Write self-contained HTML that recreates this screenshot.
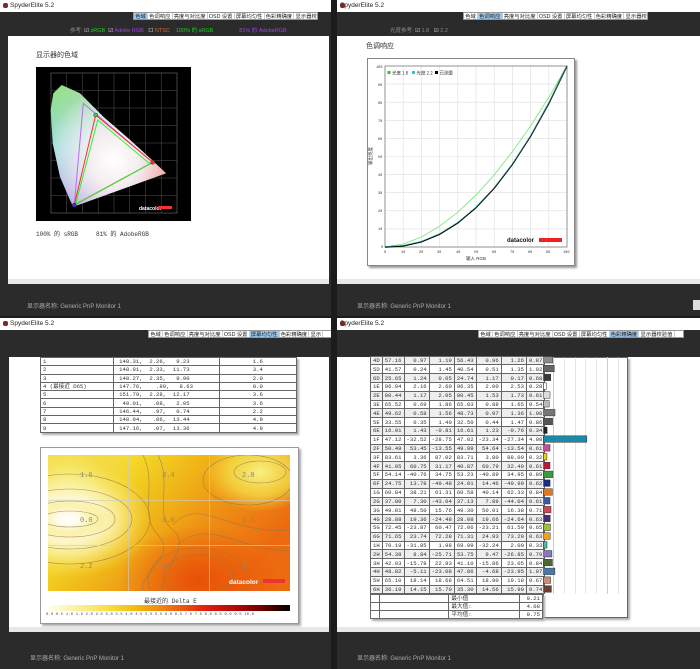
<!DOCTYPE html>
<html><head><meta charset="utf-8"><style>
*{margin:0;padding:0;box-sizing:border-box}
body{width:700px;height:669px;background:#1c1c1c;position:relative;overflow:hidden;font-family:"Liberation Sans","Noto Sans CJK SC",sans-serif}
.a{position:absolute}
.title{background:#fff;height:12px;font-size:6.5px;line-height:12px;color:#222;padding-left:10px}
.title:before{content:"";position:absolute;left:3px;top:3px;width:5px;height:5px;background:#7a2a2a;border-radius:2px}
.dark{background:#2b2b2b}
.tabs{display:flex;background:#fff;height:8px;font-size:5.3px;line-height:8px;color:#222;border:1px solid #999;overflow:hidden}
.tabs span{padding:0 1.2px;border-right:1px solid #ccc;white-space:nowrap}
.tabs .on{background:#9cc8f0}
.foot{font-size:6px;color:#aaa}
.sb{background:#e8e8e8;height:5px}
table{border-collapse:collapse;font-family:"Liberation Mono","Noto Sans CJK SC",monospace;font-size:5.6px;color:#333}
td{border:1px solid #666;padding:0 2px;white-space:nowrap;overflow:hidden}
.rt td{height:8.82px;line-height:7px}
.rt tr:nth-child(odd) td{background:#eee}
.rt td.n{text-align:right;padding-right:2px}
.lt td{height:8.3px;line-height:7px}
</style></head><body>

<!-- TOP LEFT -->
<div class="a title" style="left:0;top:0;width:331px">SpyderElite 5.2</div>
<div class="a dark" style="left:0;top:12px;width:331px;height:304px"></div>
<div class="a tabs" style="left:133px;top:12px;width:185px"><span class="on">色域</span><span>色调响应</span><span>亮度与对比度</span><span>OSD 设置</span><span>屏幕均匀性</span><span>色彩精确度</span><span>显示器校验值</span></div>
<div class="a" style="left:70px;top:26px;font-size:5.5px;color:#888;white-space:nowrap">参考: <span style="color:#ddd">☑</span> <span style="color:#2c2">sRGB</span> &nbsp;<span style="color:#ddd">☑</span> <span style="color:#94d">Adobe RGB</span> &nbsp;&nbsp;<span style="color:#fff">☐</span> <span style="color:#d63">NTSC</span> &nbsp;&nbsp;&nbsp;<span style="color:#2c2">100% 的 sRGB</span><span style="display:inline-block;width:26px"></span><span style="color:#94d">81% 的 AdobeRGB</span></div>
<div class="a" style="left:8px;top:36px;width:321px;height:243px;background:#fff"></div>
<div class="a sb" style="left:8px;top:279px;width:321px"></div>
<div class="a" style="left:36px;top:50px;font-size:7px;color:#333">显示器的色域</div>
<svg class="a" style="left:36px;top:67px" width="155" height="154" viewBox="36 67 155 154">
<defs>
<radialGradient id="g1" cx="0.55" cy="0.62" r="0.6"><stop offset="0" stop-color="#fff"/><stop offset="0.35" stop-color="#f4eef0"/><stop offset="1" stop-color="#fff" stop-opacity="0"/></radialGradient>
<linearGradient id="g2" x1="0" y1="0" x2="0.3" y2="1"><stop offset="0" stop-color="#8fe07a"/><stop offset="0.5" stop-color="#8fd8d8"/><stop offset="1" stop-color="#8a7ae0"/></linearGradient>
<linearGradient id="g3" x1="0" y1="0" x2="1" y2="0.3"><stop offset="0" stop-color="#fff" stop-opacity="0"/><stop offset="0.7" stop-color="#f0a0c0" stop-opacity=".5"/><stop offset="1" stop-color="#e88080"/></linearGradient>
</defs>
<rect x="36" y="67" width="155" height="154" fill="#000"/>
<g stroke="#555" stroke-width="0.5" fill="none">
<rect x="51" y="73" width="126" height="140" stroke="#888"/>
<path d="M66.7 73V213M82.5 73V213M98.2 73V213M114 73V213M129.7 73V213M145.5 73V213M161.2 73V213M51 90.5H177M51 108H177M51 125.5H177M51 143H177M51 160.5H177M51 178H177M51 195.5H177"/>
</g>
<path d="M61.7 85L53.3 93.3L50.7 110L52.7 143.3L60 176.7L70 200L73.3 206.7L166 173.3L150 158.3L130 140L103.3 116.7L80 93.3Z" fill="url(#g2)"/>
<path d="M61.7 85L53.3 93.3L50.7 110L52.7 143.3L60 176.7L70 200L73.3 206.7L166 173.3L150 158.3L130 140L103.3 116.7L80 93.3Z" fill="url(#g3)"/>
<path d="M61.7 85L53.3 93.3L50.7 110L52.7 143.3L60 176.7L70 200L73.3 206.7L166 173.3L150 158.3L130 140L103.3 116.7L80 93.3Z" fill="url(#g1)"/>
<path d="M83.3 103.3L152.7 162.3L74.3 205Z" fill="none" stroke="#b070f0" stroke-width="1"/>
<path d="M95.7 115L152.7 162.3L74.3 205Z" fill="none" stroke="#f03030" stroke-width="1"/>
<path d="M97.7 120L150 164L75.7 204Z" fill="none" stroke="#30f030" stroke-width="1"/>
<circle cx="95.7" cy="115" r="2" fill="#4c4" stroke="#333" stroke-width=".5"/>
<circle cx="152.7" cy="162.3" r="2" fill="#e33" stroke="#333" stroke-width=".5"/>
<circle cx="74.3" cy="205" r="2" fill="#33e" stroke="#333" stroke-width=".5"/>
<text x="139" y="210" font-size="5" fill="#fff" font-weight="bold" font-family="Liberation Sans">datacolor</text>
<rect x="158" y="206" width="14" height="3" fill="#e33"/>
</svg>
<div class="a" style="left:36px;top:229px;font-size:6px;color:#333;font-family:'Liberation Mono','Noto Sans CJK SC',monospace;white-space:nowrap">100% 的 sRGB &nbsp;&nbsp;&nbsp;&nbsp;81% 的 AdobeRGB</div>
<div class="a foot" style="left:27px;top:301px">显示器名称: Generic PnP Monitor 1</div>

<!-- TOP RIGHT -->
<div class="a title" style="left:337px;top:0;width:363px;padding-left:3px">SpyderElite 5.2</div>
<div class="a dark" style="left:337px;top:12px;width:363px;height:304px"></div>
<div class="a tabs" style="left:463px;top:12px;width:185px"><span>色域</span><span class="on">色调响应</span><span>亮度与对比度</span><span>OSD 设置</span><span>屏幕均匀性</span><span>色彩精确度</span><span>显示器校验值</span></div>
<div class="a" style="left:390px;top:26px;font-size:5.5px;color:#888;white-space:nowrap">光度参考: <span style="color:#ddd">☑</span> 1.8 &nbsp;&nbsp;<span style="color:#ddd">☑</span> 2.2</div>
<div class="a" style="left:337px;top:36px;width:363px;height:243px;background:#fff"></div>
<div class="a sb" style="left:337px;top:279px;width:363px"></div>
<div class="a" style="left:366px;top:41px;font-size:7px;color:#333">色调响应</div>
<div class="a" style="left:367px;top:58px;width:208px;height:208px;border:1px solid #888;box-shadow:2px 2px 2px #999;background:#fff"></div>
<svg class="a" style="left:367px;top:58px" width="210" height="210" viewBox="367 58 210 210">
<g stroke="#ddd" stroke-width="0.6">
<path d="M403.2 66V247M421.4 66V247M439.6 66V247M457.8 66V247M476 66V247M494.2 66V247M512.4 66V247M530.6 66V247M548.8 66V247M385 84.1H567M385 102.2H567M385 120.3H567M385 138.4H567M385 156.5H567M385 174.6H567M385 192.7H567M385 210.8H567M385 228.9H567"/>
</g>
<rect x="385" y="66" width="182" height="181" fill="none" stroke="#777" stroke-width="0.8"/>
<g font-size="3.6" fill="#333" font-family="Liberation Mono">
<text x="376" y="68">100</text><text x="378" y="86">90</text><text x="378" y="104">80</text><text x="378" y="122">70</text><text x="378" y="140">60</text><text x="378" y="158">50</text><text x="378" y="176">40</text><text x="378" y="194">30</text><text x="378" y="212">20</text><text x="378" y="230">10</text><text x="381" y="248">0</text>
<text x="384" y="253">0</text><text x="401" y="253">10</text><text x="419" y="253">20</text><text x="437" y="253">30</text><text x="456" y="253">40</text><text x="474" y="253">50</text><text x="492" y="253">60</text><text x="510" y="253">70</text><text x="528" y="253">80</text><text x="546" y="253">90</text><text x="563" y="253">100</text>
</g>
<text x="466" y="260" font-size="4.5" fill="#333" font-family="Liberation Sans,Noto Sans CJK SC">输入 RGB</text>
<text x="372" y="165" font-size="4.5" fill="#333" transform="rotate(-90 372 165)" font-family="Noto Sans CJK SC">输出亮度</text>
<rect x="387.5" y="71" width="3" height="3" fill="#2c2"/><text x="392" y="74.5" font-size="4.5" fill="#333" font-family="Noto Sans CJK SC">光度 1.8</text>
<rect x="412" y="71" width="3" height="3" fill="#2cc"/><text x="416.5" y="74.5" font-size="4.5" fill="#333" font-family="Noto Sans CJK SC">光度 2.2</text>
<rect x="435" y="71" width="3" height="3" fill="#000"/><text x="439.5" y="74.5" font-size="4.5" fill="#333" font-family="Noto Sans CJK SC">已测量</text>
<polyline fill="none" stroke="#7fe87f" stroke-width="0.9" points="385,247 403.2,244.1 421.4,237 439.6,226.2 457.8,212.2 476,195 494.2,174.9 512.4,151.7 530.6,125.9 548.8,97.3 567,66"/>
<polyline fill="none" stroke="#000" stroke-width="1.4" points="385,247 403.2,245.9 421.4,241.8 439.6,234.2 457.8,222.9 476,207.6 494.2,188.2 512.4,164.4 530.6,136.2 548.8,103.4 567,66"/>
<polyline fill="none" stroke="#2cc" stroke-width="0.5" points="385,246.5 403.2,245.4 421.4,241.3 439.6,233.7 457.8,222.4 476,207.1 494.2,187.7 512.4,163.9 530.6,135.7 548.8,102.9 567,66"/>
<text x="507" y="242" font-size="6" fill="#111" font-weight="bold" font-family="Liberation Sans">datacolor</text>
<rect x="539" y="238" width="23" height="4" fill="#e22"/>
</svg>
<div class="a foot" style="left:357px;top:301px">显示器名称: Generic PnP Monitor 1</div>
<div class="a" style="left:693px;top:300px;width:7px;height:10px;background:#ddd"></div>

<!-- BOTTOM LEFT -->
<div class="a title" style="left:0;top:318px;width:331px">SpyderElite 5.2</div>
<div class="a dark" style="left:0;top:330px;width:331px;height:339px"></div>
<div class="a tabs" style="left:148px;top:330px;width:183px;border-right:none"><span>色域</span><span>色调响应</span><span>亮度与对比度</span><span>OSD 设置</span><span class="on">屏幕均匀性</span><span>色彩精确度</span><span>显示</span></div>
<div class="a" style="left:9px;top:357px;width:320px;height:270px;background:#fff"></div>
<div class="a sb" style="left:9px;top:627px;width:320px"></div>
<table class="a lt" style="left:40px;top:357px;width:257px;box-shadow:2px 2px 2px #aaa">
<colgroup><col style="width:73px"><col style="width:106px"><col style="width:78px"></colgroup>
<tr><td>1</td><td>&nbsp;148.31, &nbsp;2.26, &nbsp;&nbsp;9.23</td><td style="text-align:center">1.6</td></tr>
<tr><td>2</td><td>&nbsp;148.91, &nbsp;2.33, &nbsp;11.73</td><td style="text-align:center">3.4</td></tr>
<tr><td>3</td><td>&nbsp;148.27, &nbsp;2.35, &nbsp;&nbsp;9.90</td><td style="text-align:center">2.0</td></tr>
<tr><td>4 (最接近 D65)</td><td>&nbsp;147.76, &nbsp;&nbsp;&nbsp;.80, &nbsp;&nbsp;8.63</td><td style="text-align:center">0.0</td></tr>
<tr><td>5</td><td>&nbsp;151.79, &nbsp;2.28, &nbsp;12.17</td><td style="text-align:center">3.6</td></tr>
<tr><td>6</td><td>&nbsp;&nbsp;49.01, &nbsp;&nbsp;.08, &nbsp;&nbsp;2.05</td><td style="text-align:center">3.6</td></tr>
<tr><td>7</td><td>&nbsp;146.44, &nbsp;&nbsp;.97, &nbsp;&nbsp;0.74</td><td style="text-align:center">2.2</td></tr>
<tr><td>8</td><td>&nbsp;148.94, &nbsp;&nbsp;.06, &nbsp;13.44</td><td style="text-align:center">4.9</td></tr>
<tr><td>9</td><td>&nbsp;147.16, &nbsp;&nbsp;.07, &nbsp;13.36</td><td style="text-align:center">4.9</td></tr>
</table>
<div class="a" style="left:40px;top:447px;width:259px;height:177px;border:1px solid #999;box-shadow:2px 2px 2px #aaa;background:#fff"></div>
<svg class="a" style="left:48px;top:455px" width="242" height="136" viewBox="0 0 242 136">
<defs>
<linearGradient id="h0" x1="0" y1="0" x2="1" y2="0.5"><stop offset="0" stop-color="#f8ec80"/><stop offset="0.3" stop-color="#f4d828"/><stop offset="0.5" stop-color="#f0b818"/><stop offset="0.75" stop-color="#ee8c14"/><stop offset="1" stop-color="#ec6a10"/></linearGradient>
<radialGradient id="h1"><stop offset="0" stop-color="#fff"/><stop offset="0.3" stop-color="#fefbe8"/><stop offset="0.6" stop-color="#faf0a0" stop-opacity=".8"/><stop offset="1" stop-color="#f6e040" stop-opacity="0"/></radialGradient>
<radialGradient id="h2"><stop offset="0" stop-color="#f8f080"/><stop offset="0.6" stop-color="#f4d840" stop-opacity=".8"/><stop offset="1" stop-color="#f4d040" stop-opacity="0"/></radialGradient>
<radialGradient id="h3"><stop offset="0" stop-color="#e85008"/><stop offset="1" stop-color="#e85008" stop-opacity="0"/></radialGradient>
</defs>
<rect width="242" height="136" fill="url(#h0)"/>
<ellipse cx="150" cy="125" rx="80" ry="55" fill="url(#h3)"/>
<ellipse cx="212" cy="17" rx="55" ry="40" fill="url(#h2)"/>
<ellipse cx="20" cy="25" rx="70" ry="50" fill="url(#h2)"/>
<ellipse cx="20" cy="64" rx="85" ry="60" fill="url(#h1)"/>
<ellipse cx="20" cy="64" rx="40" ry="22" fill="url(#h1)"/>
<g fill="none" stroke="#8a7a50" stroke-width="0.6" opacity=".8">
<ellipse cx="22" cy="64" rx="28" ry="8"/><ellipse cx="22" cy="64" rx="45" ry="18"/><ellipse cx="22" cy="64" rx="62" ry="30"/><ellipse cx="22" cy="64" rx="80" ry="45"/>
<path d="M95 0C110 30 90 60 110 80S90 120 95 136"/><path d="M110 0C125 30 105 60 125 75S110 120 115 136"/>
<ellipse cx="212" cy="17" rx="26" ry="11"/><ellipse cx="200" cy="25" rx="45" ry="25"/>
<path d="M125 70C150 40 180 80 242 75"/><path d="M130 90C160 60 200 100 242 95"/>
<ellipse cx="150" cy="120" rx="35" ry="20"/><ellipse cx="150" cy="125" rx="50" ry="32"/>
</g>
<g stroke="#ccc" stroke-width="0.6"><path d="M80.7 0V136M161.3 0V136M0 45.3H242M0 90.7H242"/></g>
<g font-size="7" fill="#887" font-family="Liberation Mono"><text x="32" y="22">1.6</text><text x="114" y="22">3.4</text><text x="194" y="22">2.0</text><text x="32" y="67">0.0</text><text x="114" y="67">3.6</text><text x="194" y="67">3.6</text><text x="32" y="113">2.2</text><text x="114" y="113">4.9</text><text x="194" y="113">4.9</text></g>
<text x="181" y="129" font-size="6.5" fill="#fff" font-weight="bold" font-family="Liberation Sans">datacolor</text>
<rect x="215" y="124" width="22" height="4" fill="#e33"/>
</svg>
<div class="a" style="left:144px;top:596px;font-size:6px;color:#333;font-family:'Liberation Mono','Noto Sans CJK SC',monospace">最接近的 Delta E</div>
<div class="a" style="left:48px;top:605px;width:242px;height:6px;background:linear-gradient(90deg,#fffff0,#fbf0a0 12%,#f6e040 25%,#f0c010 35%,#f09010 45%,#ec5a10 55%,#e02010 65%,#b00808 78%,#600000 90%,#000)"></div>
<div class="a" style="left:46px;top:613px;font-size:3.8px;color:#444;font-family:'Liberation Mono',monospace;white-space:nowrap;letter-spacing:0.2px">0.0 0.5 1.0 1.5 2.0 2.5 3.0 3.5 4.0 4.5 5.0 5.5 6.0 6.5 7.0 7.5 8.0 8.5 9.0 9.5 10.0</div>
<div class="a foot" style="left:30px;top:653px">显示器名称: Generic PnP Monitor 1</div>

<!-- BOTTOM RIGHT -->
<div class="a title" style="left:337px;top:318px;width:363px;padding-left:3px">SpyderElite 5.2</div>
<div class="a dark" style="left:337px;top:330px;width:363px;height:339px"></div>
<div class="a tabs" style="left:478px;top:330px;width:206px"><span>色域</span><span>色调响应</span><span>亮度与对比度</span><span>OSD 设置</span><span>屏幕均匀性</span><span class="on">色彩精确度</span><span>显示器校验值</span></div>
<div class="a" style="left:337px;top:357px;width:363px;height:270px;background:#fff"></div>
<div class="a sb" style="left:337px;top:627px;width:363px"></div>
<div class="a" style="left:543px;top:357px;width:85px;height:261px;border:1px solid #666;box-shadow:2px 2px 2px #aaa;background:#fff"></div>
<div class="a" style="left:543px;top:357px;width:85px;height:237px;background:repeating-linear-gradient(90deg,transparent 0,transparent 10.2px,#ccc 10.2px,#ccc 10.8px)"></div>
<table class="a rt" style="left:370px;top:355.5px;width:173px">
<colgroup><col style="width:9px"><col style="width:24px"><col style="width:23px"><col style="width:23px"><col style="width:24px"><col style="width:24px"><col style="width:24px"><col style="width:22px"></colgroup>
<tr><td>4D</td><td>57.16</td><td class="n">0.97</td><td class="n">1.19</td><td>56.43</td><td class="n">0.96</td><td class="n">1.26</td><td class="n">0.87</td></tr>
<tr><td>5D</td><td>41.57</td><td class="n">0.24</td><td class="n">1.45</td><td>40.54</td><td class="n">0.51</td><td class="n">1.35</td><td class="n">1.02</td></tr>
<tr><td>6D</td><td>25.65</td><td class="n">1.24</td><td class="n">0.05</td><td>24.74</td><td class="n">1.17</td><td class="n">0.17</td><td class="n">0.68</td></tr>
<tr><td>1E</td><td>96.04</td><td class="n">2.16</td><td class="n">2.60</td><td>96.35</td><td class="n">2.00</td><td class="n">2.53</td><td class="n">0.28</td></tr>
<tr><td>2E</td><td>80.44</td><td class="n">1.17</td><td class="n">2.05</td><td>80.45</td><td class="n">1.53</td><td class="n">1.73</td><td class="n">0.61</td></tr>
<tr><td>3E</td><td>65.52</td><td class="n">0.69</td><td class="n">1.86</td><td>65.03</td><td class="n">0.88</td><td class="n">1.65</td><td class="n">0.54</td></tr>
<tr><td>4E</td><td>49.62</td><td class="n">0.58</td><td class="n">1.56</td><td>48.73</td><td class="n">0.97</td><td class="n">1.36</td><td class="n">1.08</td></tr>
<tr><td>5E</td><td>33.55</td><td class="n">0.35</td><td class="n">1.40</td><td>32.50</td><td class="n">0.44</td><td class="n">1.47</td><td class="n">0.86</td></tr>
<tr><td>6E</td><td>16.91</td><td class="n">1.43</td><td class="n">-0.81</td><td>16.61</td><td class="n">1.23</td><td class="n">-0.76</td><td class="n">0.34</td></tr>
<tr><td>1F</td><td>47.12</td><td class="n">-32.52</td><td class="n">-28.75</td><td>47.02</td><td class="n">-23.34</td><td class="n">-27.34</td><td class="n">4.08</td></tr>
<tr><td>2F</td><td>50.49</td><td class="n">53.45</td><td class="n">-13.55</td><td>49.99</td><td class="n">54.64</td><td class="n">-13.54</td><td class="n">0.61</td></tr>
<tr><td>3F</td><td>83.61</td><td class="n">3.36</td><td class="n">87.02</td><td>83.71</td><td class="n">3.80</td><td class="n">88.09</td><td class="n">0.32</td></tr>
<tr><td>4F</td><td>41.05</td><td class="n">60.75</td><td class="n">31.17</td><td>40.87</td><td class="n">60.79</td><td class="n">32.40</td><td class="n">0.61</td></tr>
<tr><td>5F</td><td>54.14</td><td class="n">-40.76</td><td class="n">34.75</td><td>53.23</td><td class="n">-40.89</td><td class="n">34.95</td><td class="n">0.89</td></tr>
<tr><td>6F</td><td>24.75</td><td class="n">13.78</td><td class="n">-49.48</td><td>24.01</td><td class="n">14.46</td><td class="n">-49.90</td><td class="n">0.62</td></tr>
<tr><td>1G</td><td>60.84</td><td class="n">38.21</td><td class="n">61.31</td><td>60.58</td><td class="n">40.14</td><td class="n">62.33</td><td class="n">0.84</td></tr>
<tr><td>2G</td><td>37.80</td><td class="n">7.30</td><td class="n">-43.04</td><td>37.13</td><td class="n">7.89</td><td class="n">-44.04</td><td class="n">0.61</td></tr>
<tr><td>3G</td><td>49.81</td><td class="n">48.50</td><td class="n">15.76</td><td>49.30</td><td class="n">50.01</td><td class="n">16.38</td><td class="n">0.71</td></tr>
<tr><td>4G</td><td>28.88</td><td class="n">19.36</td><td class="n">-24.48</td><td>28.08</td><td class="n">19.66</td><td class="n">-24.64</td><td class="n">0.63</td></tr>
<tr><td>5G</td><td>72.45</td><td class="n">-23.87</td><td class="n">60.47</td><td>72.06</td><td class="n">-23.21</td><td class="n">61.50</td><td class="n">0.65</td></tr>
<tr><td>6G</td><td>71.65</td><td class="n">23.74</td><td class="n">72.28</td><td>71.31</td><td class="n">24.93</td><td class="n">73.20</td><td class="n">0.63</td></tr>
<tr><td>1H</td><td>70.19</td><td class="n">-31.85</td><td class="n">1.98</td><td>69.99</td><td class="n">-32.24</td><td class="n">2.00</td><td class="n">0.33</td></tr>
<tr><td>2H</td><td>54.38</td><td class="n">8.84</td><td class="n">-25.71</td><td>53.75</td><td class="n">9.47</td><td class="n">-26.85</td><td class="n">0.79</td></tr>
<tr><td>3H</td><td>42.03</td><td class="n">-15.78</td><td class="n">22.93</td><td>41.10</td><td class="n">-15.86</td><td class="n">23.05</td><td class="n">0.84</td></tr>
<tr><td>4H</td><td>48.82</td><td class="n">-5.11</td><td class="n">-23.08</td><td>47.86</td><td class="n">-4.68</td><td class="n">-23.95</td><td class="n">1.07</td></tr>
<tr><td>5H</td><td>65.10</td><td class="n">18.14</td><td class="n">18.68</td><td>64.51</td><td class="n">18.90</td><td class="n">19.18</td><td class="n">0.67</td></tr>
<tr><td>6H</td><td>36.19</td><td class="n">14.15</td><td class="n">15.70</td><td>35.30</td><td class="n">14.56</td><td class="n">15.90</td><td class="n">0.74</td></tr>
</table>
<table class="a" style="left:370px;top:594px;width:173px;box-shadow:2px 2px 2px #aaa;background:#fff">
<colgroup><col style="width:9px"><col style="width:70px"><col style="width:71px"><col style="width:23px"></colgroup>
<tr><td style="height:8px"></td><td></td><td style="line-height:7px">最小值</td><td style="text-align:right;line-height:7px">0.21</td></tr>
<tr><td style="height:8px"></td><td></td><td style="line-height:7px">最大值:</td><td style="text-align:right;line-height:7px">4.08</td></tr>
<tr><td style="height:8px"></td><td></td><td style="line-height:7px">平均值:</td><td style="text-align:right;line-height:7px">0.75</td></tr>
</table>
<svg class="a" style="left:543px;top:355px" width="50" height="240" viewBox="0 0 50 240">
<g stroke="#333" stroke-width="0.5">
<rect x="0.5" y="1.5" width="9.2" height="6.5" fill="#8a8a8a"/>
<rect x="0.5" y="10.3" width="10.8" height="6.5" fill="#666"/>
<rect x="0.5" y="19.1" width="7.2" height="6.5" fill="#3a3a3a"/>
<rect x="0.5" y="27.9" width="3" height="6.5" fill="#fff"/>
<rect x="0.5" y="36.7" width="6.5" height="6.5" fill="#ddd"/>
<rect x="0.5" y="45.5" width="5.7" height="6.5" fill="#bbb"/>
<rect x="0.5" y="54.4" width="11.5" height="6.5" fill="#777"/>
<rect x="0.5" y="63.2" width="9.1" height="6.5" fill="#555"/>
<rect x="0.5" y="72" width="3.6" height="6.5" fill="#222"/>
<rect x="0.5" y="80.8" width="43.3" height="6.5" fill="#1a8aa8"/>
<rect x="0.5" y="89.6" width="6.5" height="6.5" fill="#d04898"/>
<rect x="0.5" y="98.5" width="3.4" height="6.5" fill="#f0d010"/>
<rect x="0.5" y="107.3" width="6.5" height="6.5" fill="#c01830"/>
<rect x="0.5" y="116.1" width="9.4" height="6.5" fill="#3a9a40"/>
<rect x="0.5" y="124.9" width="6.6" height="6.5" fill="#1a2a8a"/>
<rect x="0.5" y="133.7" width="8.9" height="6.5" fill="#e07820"/>
<rect x="0.5" y="142.5" width="6.5" height="6.5" fill="#3a5aa8"/>
<rect x="0.5" y="151.4" width="7.5" height="6.5" fill="#c84858"/>
<rect x="0.5" y="160.2" width="6.7" height="6.5" fill="#4a2a70"/>
<rect x="0.5" y="169" width="6.9" height="6.5" fill="#a0c030"/>
<rect x="0.5" y="177.8" width="6.7" height="6.5" fill="#f0a020"/>
<rect x="0.5" y="186.6" width="3.5" height="6.5" fill="#50b8a8"/>
<rect x="0.5" y="195.5" width="8.4" height="6.5" fill="#8878c0"/>
<rect x="0.5" y="204.3" width="8.9" height="6.5" fill="#4a6a30"/>
<rect x="0.5" y="213.1" width="11.4" height="6.5" fill="#4a78a8"/>
<rect x="0.5" y="221.9" width="7.1" height="6.5" fill="#c89078"/>
<rect x="0.5" y="230.7" width="7.9" height="6.5" fill="#6a4030"/>
</g>
</svg>
<div class="a foot" style="left:357px;top:653px">显示器名称: Generic PnP Monitor 1</div>
</body></html>
